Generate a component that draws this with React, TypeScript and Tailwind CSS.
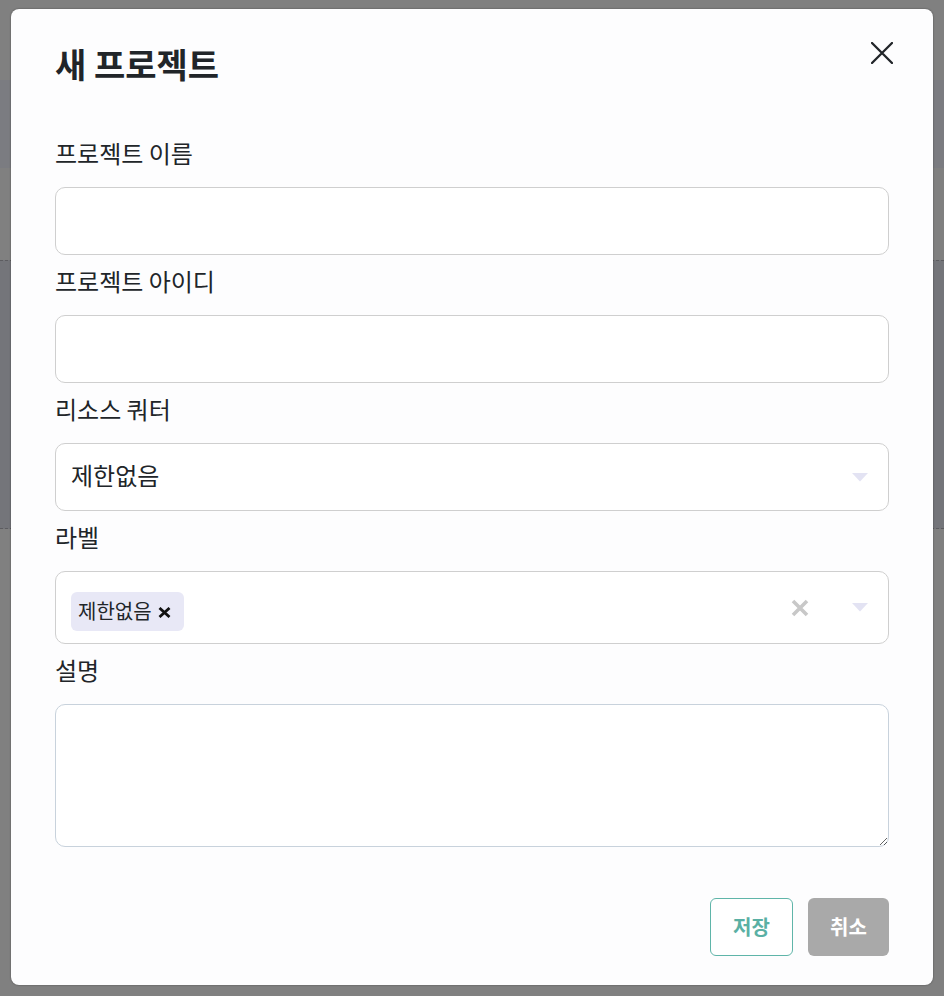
import React from "react";

const font = { fontFamily: '"Noto Sans CJK KR", "Noto Sans", sans-serif' };

function Caret() {
  return (
    <svg width="16" height="9" viewBox="0 0 16 9" className="shrink-0">
      <path d="M0 0 L16 0 L8 8.5 Z" fill="#e3e3f3" />
    </svg>
  );
}

function Label({ children }: { children: React.ReactNode }) {
  return (
    <div className="mt-[9px] mb-[18px] text-[24px] leading-[33px] text-[#212529]">{children}</div>
  );
}

export default function App() {
  return (
    <div className="relative h-[996px] w-full overflow-hidden" style={font}>
      {/* backdrop page */}
      <div className="flex h-full flex-col">
        <div className="h-[80px] bg-[#808080]" />
        <div className="h-[88px] bg-[#7b7c81]" />
        <div className="h-[92px] bg-[#808080]" />
        <div className="h-[269px] border-y border-dashed border-[#5c5c60] bg-[#74757a]" />
        <div className="flex-1 bg-[#808080]" />
      </div>

      {/* modal */}
      <div className="absolute left-[11px] top-[9px] w-[922px] rounded-[8px] bg-[#fdfdfe] pl-[44px] pr-[44px] pt-[30px] pb-[29px] shadow-[0_0_2px_rgba(0,0,0,0.45)]">
        <div className="flex items-start justify-between">
          <h1 className="text-[34px] font-bold leading-[50px] text-[#212529]">새 프로젝트</h1>
          <button className="mr-[-4px] mt-[2px] flex h-[23px] w-[23px] items-center justify-center">
            <svg width="22" height="22" viewBox="0 0 22 22">
              <path d="M1 1 L21 21 M21 1 L1 21" stroke="#212529" strokeWidth="2.3" strokeLinecap="round" />
            </svg>
          </button>
        </div>

        <div className="mt-[47px]">
          <Label>프로젝트 이름</Label>
          <input className="block h-[68px] w-full rounded-[10px] border border-[#cfcfcf] bg-white px-[15px] text-[24px] outline-none" />

          <Label>프로젝트 아이디</Label>
          <input className="block h-[68px] w-full rounded-[10px] border border-[#cfcfcf] bg-white px-[15px] text-[24px] outline-none" />

          <Label>리소스 쿼터</Label>
          <div className="flex h-[68px] w-full items-center justify-between rounded-[10px] border border-[#cfcfcf] bg-white pl-[15px] pr-[20px]">
            <span className="pb-[5px] text-[24px] text-[#212529]">제한없음</span>
            <Caret />
          </div>

          <Label>라벨</Label>
          <div className="flex h-[73px] w-full items-center rounded-[10px] border border-[#cfcfcf] bg-white pl-[15px] pr-[20px]">
            <div className="mt-[8px] flex h-[39px] items-center gap-[6px] rounded-[6px] bg-[#e8e8f6] pl-[7px] pr-[13px]">
              <span className="pb-[2px] text-[20px] leading-none text-[#212529]">제한없음</span>
              <svg width="13" height="11" viewBox="0 0 13 11" className="mt-[2px]">
                <path d="M1.5 1 L11.5 10 M11.5 1 L1.5 10" stroke="#111" strokeWidth="2.8" />
              </svg>
            </div>
            <div className="flex-1" />
            <svg width="18" height="18" viewBox="0 0 18 18" className="mr-[43px]">
              <path d="M2 2 L16 16 M16 2 L2 16" stroke="#c8c8c8" strokeWidth="3.6" />
            </svg>
            <Caret />
          </div>

          <Label>설명</Label>
          <textarea className="block h-[143px] w-full resize-y rounded-[10px] border border-[#c8d2dc] bg-white px-[15px] py-[10px] text-[24px] outline-none" />
        </div>

        <div className="mt-[51px] flex justify-end gap-[15px]">
          <button className="h-[58px] w-[83px] rounded-[6px] border border-[#5fb5a9] bg-white text-[20px] font-bold text-[#5ab0a4]">
            저장
          </button>
          <button className="h-[58px] w-[81px] rounded-[6px] bg-[#a9a9a9] text-[20px] font-bold text-white">
            취소
          </button>
        </div>
      </div>
    </div>
  );
}
